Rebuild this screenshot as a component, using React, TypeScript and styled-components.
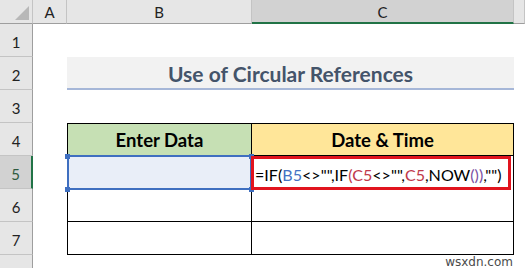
import React from "react";
import styled, { createGlobalStyle } from "styled-components";

const GlobalStyle = createGlobalStyle`
  html, body {
    margin: 0;
    padding: 0;
    background: #ffffff;
  }
  body {
    font-family: Lato, "Open Sans", sans-serif;
  }
`;

const green = "#217346";
const headerBg = "#e6e6e6";
const headerActive = "#d2d2d2";
const headerLine = "#c4c4c4";

const Sheet = styled.div`
  position: relative;
  width: 525px;
  height: 268px;
  overflow: hidden;
  display: grid;
  grid-template-columns: 33px 34px 185px 262px 1fr;
  grid-template-rows: 24px repeat(8, 33px);
  background: #ffffff;
  color: #000;
`;

const Corner = styled.div`
  position: relative;
  background: ${headerBg};
  border-right: 1px solid ${headerLine};
  border-bottom: 1px solid #9e9e9e;
  box-sizing: border-box;

  &::after {
    content: "";
    position: absolute;
    right: 3px;
    bottom: 3px;
    width: 0;
    height: 0;
    border-left: 14px solid transparent;
    border-bottom: 14px solid #b8b8b8;
  }
`;

const ColHeader = styled.div<{ $active?: boolean }>`
  display: flex;
  align-items: center;
  justify-content: center;
  box-sizing: border-box;
  background: ${(p) => (p.$active ? headerActive : headerBg)};
  border-right: 1px solid ${headerLine};
  border-bottom: ${(p) => (p.$active ? `2px solid ${green}` : "1px solid #9e9e9e")};
  font-size: 15px;
  color: #222;
  padding-top: ${(p) => (p.$active ? "1px" : "0")};
`;

const RowHeader = styled.div<{ $active?: boolean }>`
  display: flex;
  align-items: center;
  justify-content: center;
  box-sizing: border-box;
  background: ${(p) => (p.$active ? headerActive : headerBg)};
  border-right: ${(p) => (p.$active ? `2px solid ${green}` : "1px solid #9e9e9e")};
  border-bottom: 1px solid ${headerLine};
  font-size: 15px;
  color: ${(p) => (p.$active ? "#2f5a3f" : "#222")};
  padding-top: 4px;
`;

const Blank = styled.div``;

const Title = styled.div`
  grid-column: span 2;
  display: flex;
  align-items: center;
  justify-content: center;
  box-sizing: border-box;
  background: #f2f2f2;
  border-bottom: 2px solid #a6b7d8;
  color: #44546a;
  font-weight: 700;
  font-size: 21px;
  padding-top: 2px;
`;

const TableCell = styled.div<{ $fill?: string; $left?: boolean; $top?: boolean }>`
  display: flex;
  align-items: center;
  justify-content: center;
  box-sizing: border-box;
  background: ${(p) => p.$fill ?? "#ffffff"};
  border-right: 1px solid #000;
  border-bottom: 1px solid #000;
  border-left: ${(p) => (p.$left ? "1px solid #000" : "none")};
  border-top: ${(p) => (p.$top ? "1px solid #000" : "none")};
  font-weight: 700;
  font-size: 18.5px;
  padding-top: 1px;
`;

const SelectedCell = styled.div`
  position: relative;
  background: #e9eef8;
  border-right: 1px solid #000;
  box-sizing: border-box;

  &::after {
    content: "";
    position: absolute;
    inset: -1px -1px -1px 0;
    border: 2px solid #3f6fc0;
  }
`;

const Handle = styled.span<{ $top?: boolean; $right?: boolean }>`
  position: absolute;
  z-index: 1;
  width: 5px;
  height: 5px;
  background: #3f6fc0;
  ${(p) => (p.$top ? "top: -2px;" : "bottom: -3px;")}
  ${(p) => (p.$right ? "right: -3px;" : "left: -2px;")}
`;

const FormulaCell = styled.div`
  position: relative;
  box-sizing: border-box;
  border-right: 1px solid #000;
  display: flex;
`;

const RedBox = styled.div`
  position: absolute;
  z-index: 2;
  left: -1px;
  top: 0;
  width: 260px;
  height: 34px;
  box-sizing: border-box;
  border: 3px solid #e1141e;
  display: flex;
  align-items: center;
  padding-left: 1px;
  padding-top: 3px;
  font-size: 16.1px;
  white-space: nowrap;
`;

const Tok = styled.span<{ $c?: string }>`
  color: ${(p) => p.$c ?? "#000"};
`;

const Watermark = styled.div`
  position: absolute;
  right: 12px;
  bottom: 0;
  font-family: "DejaVu Sans", sans-serif;
  font-size: 12px;
  line-height: 12px;
  color: #4a4a4a;
  text-shadow: 0 0 2px #fff;
`;

const blue = "#4472c4";
const maroon = "#c0394b";
const purple = "#7a4fa3";

function Formula() {
  return (
    <>
      <Tok>=IF(</Tok>
      <Tok $c={blue}>B5</Tok>
      <Tok>&lt;&gt;"",IF</Tok>
      <Tok $c={maroon}>(C5</Tok>
      <Tok>&lt;&gt;"",</Tok>
      <Tok $c={maroon}>C5</Tok>
      <Tok>,NOW</Tok>
      <Tok $c={purple}>())</Tok>
      <Tok>,"")</Tok>
    </>
  );
}

export default function App() {
  return (
    <>
      <GlobalStyle />
      <Sheet>
        <Corner />
        <ColHeader>A</ColHeader>
        <ColHeader>B</ColHeader>
        <ColHeader $active>C</ColHeader>
        <ColHeader />

        <RowHeader>1</RowHeader>
        <Blank /><Blank /><Blank /><Blank />

        <RowHeader>2</RowHeader>
        <Blank />
        <Title>Use of Circular References</Title>
        <Blank />

        <RowHeader>3</RowHeader>
        <Blank /><Blank /><Blank /><Blank />

        <RowHeader>4</RowHeader>
        <Blank />
        <TableCell $fill="#c6e0b4" $left $top>Enter Data</TableCell>
        <TableCell $fill="#ffe699" $top>Date &amp; Time</TableCell>
        <Blank />

        <RowHeader $active>5</RowHeader>
        <Blank />
        <SelectedCell>
          <Handle $top />
          <Handle />
          <Handle $top $right />
          <Handle $right />
        </SelectedCell>
        <FormulaCell>
          <RedBox>
            <Formula />
          </RedBox>
        </FormulaCell>
        <Blank />

        <RowHeader>6</RowHeader>
        <Blank />
        <TableCell $left />
        <TableCell />
        <Blank />

        <RowHeader>7</RowHeader>
        <Blank />
        <TableCell $left />
        <TableCell />
        <Blank />

        <RowHeader />
        <Blank /><Blank /><Blank /><Blank />

        <Watermark>wsxdn.com</Watermark>
      </Sheet>
    </>
  );
}
